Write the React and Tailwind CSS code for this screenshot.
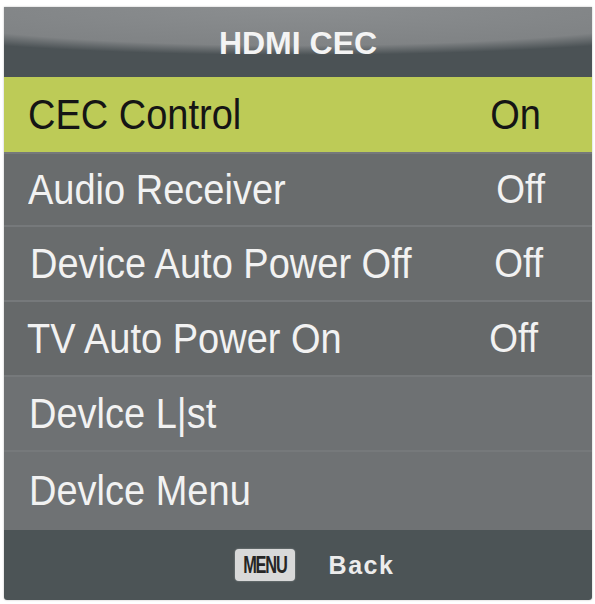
const rows = [
  { label: "Audio Receiver", value: "Off", h: "h-[73px]", pl: "pl-[24px]", pr: "pr-[47px]", bg: "bg-[#696c6d]" },
  { label: "Device Auto Power Off", value: "Off", h: "h-[75px]", pl: "pl-[26px]", pr: "pr-[49px]", bg: "bg-[#696c6d]" },
  { label: "TV Auto Power On", value: "Off", h: "h-[75px]", pl: "pl-[23px]", pr: "pr-[54px]", bg: "bg-[#66696a]" },
  { label: "Devlce L|st", value: "", h: "h-[75px]", pl: "pl-[25px]", pr: "pr-[50px]", bg: "bg-[#6e7173]" },
  { label: "Devlce Menu", value: "", h: "h-[80px]", pl: "pl-[25px]", pr: "pr-[50px]", bg: "bg-[#6f7274]" },
];

function Row({ label, value, h, pl, pr, bg }) {
  return (
    <div className={`flex items-center justify-between border-t-2 border-[#76797b] ${h} ${pl} ${pr} ${bg}`}>
      <span className="inline-block scale-y-110 text-[38px] leading-none text-[#f2f2f2]">{label}</span>
      <span className="inline-block scale-y-110 text-[37px] leading-none text-[#f2f2f2]">{value}</span>
    </div>
  );
}

export default function App() {
  return (
    <div className="min-h-screen bg-white pt-[7px] pl-[4px] font-['Liberation_Sans',Arial,sans-serif]">
      <div className="w-[588px] overflow-hidden rounded-b-[3px] shadow-[0_0_2px_rgba(0,0,0,0.3)]">
        {/* title bar */}
        <div className="flex h-[70px] items-center justify-center bg-[radial-gradient(ellipse_85%_48px_at_50%_0%,#8b8e90_0%,#808385_80%,#4b5255_100%)]">
          <span className="mt-[2px] text-[32px] font-bold leading-none text-[#f4f4f4]">HDMI CEC</span>
        </div>

        {/* selected row */}
        <div className="flex h-[75px] items-center justify-between bg-[#bdcb57] pl-[24px] pr-[51px]">
          <span className="inline-block scale-y-110 text-[38px] leading-none text-[#151515]">CEC Control</span>
          <span className="inline-block scale-y-110 text-[38px] leading-none text-[#151515]">On</span>
        </div>

        {rows.map((r) => (
          <Row key={r.label} {...r} />
        ))}

        {/* footer */}
        <div className="flex h-[70px] items-center justify-center gap-[34px] bg-[#4c5456] pl-[33px]">
          <span className="flex h-[32px] w-[60px] items-center justify-center rounded-[4px] bg-[#d8d9d9] shadow-[0_0_2px_rgba(255,255,255,0.4)]">
            <span className="inline-block scale-x-[0.78] scale-y-110 text-[21px] font-bold tracking-[-1.5px] text-[#262626]">MENU</span>
          </span>
          <span className="text-[25px] font-bold leading-none tracking-[1.5px] text-[#ececec]">Back</span>
        </div>
      </div>
    </div>
  );
}
